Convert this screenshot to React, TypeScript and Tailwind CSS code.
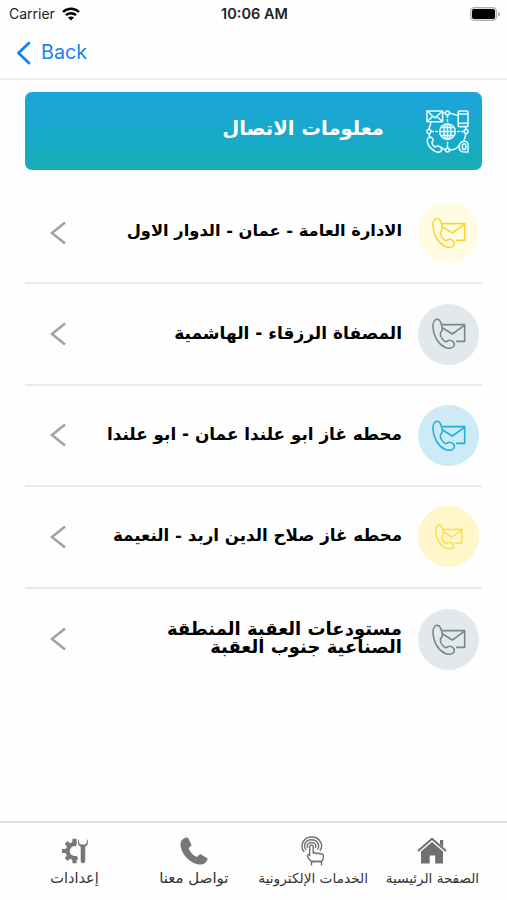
type Contact = {
    lines: string[];
    circle: string;
    icon: string;
    iconSize: string;
    textSize: string;
};

const contacts: Contact[] = [
    { lines: ["الادارة العامة - عمان - الدوار الاول"], circle: "bg-[#fffce3]", icon: "text-[#f9d72f]", iconSize: "w-[34px]", textSize: "text-[16.3px]" },
    { lines: ["المصفاة الرزقاء - الهاشمية"], circle: "bg-[#e2e9eb]", icon: "text-[#76868a]", iconSize: "w-[34px]", textSize: "text-[17px]" },
    { lines: ["محطه غاز ابو علندا عمان - ابو علندا"], circle: "bg-[#cdebf7]", icon: "text-[#22addf]", iconSize: "w-[34px]", textSize: "text-[16.85px]" },
    { lines: ["محطه غاز صلاح الدين اربد - النعيمة"], circle: "bg-[#fff6c9]", icon: "text-[#f9dc3c]", iconSize: "w-[28px]", textSize: "text-[16.7px]" },
    { lines: ["مستودعات العقبة المنطقة", "الصناعية جنوب العقبة"], circle: "bg-[#e2e9eb]", icon: "text-[#76868a]", iconSize: "w-[34px]", textSize: "text-[18px]" },
];

function PhoneMailIcon({ className }: { className?: string }) {
    return (
        <svg viewBox="65 56 102 94" className={className} fill="none" stroke="currentColor" strokeWidth="4.8" strokeLinecap="round" strokeLinejoin="round">
            <path d="M79 60C72 62 67 72 68 84C69 108 82 132 102 143C113 149 127 148 131 140C134 132 128 124 119 123C112 122 111 128 105 127C97 122 90 111 90 103C91 98 96 96 96 88C95 76 89 57 79 60Z" />
            <path d="M98 76H163V126H139" />
            <path d="M97 86L126 104L162 78" />
        </svg>
    );
}

function NetworkIcon() {
    return (
        <svg viewBox="0 0 44 44" className="h-[43px] w-[43px]" fill="none" stroke="#e6fbff" strokeWidth="1.6" strokeLinejoin="round" strokeLinecap="round">
            {/* globe */}
            <circle cx="22" cy="22" r="8" />
            <ellipse cx="22" cy="22" rx="3.6" ry="8" />
            <path d="M22 14V30M14 22H30M15.5 18H28.5M15.5 26H28.5" />
            {/* ring and its dots */}
            <path d="M17 3L20 2.6M24 3L32 5.5M5 13L3 19.5M3 24L4 28M41 19.5L40 17M41 24L39 31M15 38L20 41M24 41C28 41 32 39 34 36" />
            <path d="M22 5V7.5M22 10V11.5M22 33V34.5M22 36V38.5M5 22H7.5M10 22H11.5M32.5 22H34M36.5 22H39" />
            <circle cx="22" cy="3" r="2" />
            <circle cx="22" cy="41" r="2" />
            <circle cx="3" cy="22" r="2" />
            <circle cx="41" cy="22" r="2" />
            {/* envelope */}
            <path d="M1 1H17V12H1ZM1 1L9 8L17 1M1 12L7 6.5M17 12L11 6.5" />
            {/* mobile */}
            <rect x="33" y="1" width="10" height="16" rx="1.2" />
            <path d="M33 4H43M33 13.5H43" />
            {/* handset */}
            <path d="M3 28C0 30 1 36 6 40C10 44 15 44 16 41C17 39 13 36 11 37L9 38C7 36 6 35 6 33C9 31 6 27 3 28Z" />
            {/* at sign */}
            <path d="M43 43H39C35 43 33.5 40 34 37C34.5 33.5 37 32 39.5 32C42 32 43 33.5 43 36V43" />
            <ellipse cx="39" cy="37.5" rx="1.8" ry="3" />
        </svg>
    );
}

function WifiIcon() {
    return (
        <svg viewBox="0 0 18 14" className="h-[14px] w-[18px]" fill="none" stroke="#000" strokeWidth="2.4">
            <path d="M1 5C5.5 .6 12.5 .6 17 5" />
            <path d="M4 8.2C6.8 5.5 11.2 5.5 14 8.2" />
            <path d="M9 13.6L6 10.5C7.7 9 10.3 9 12 10.5Z" fill="#000" stroke="none" />
        </svg>
    );
}

function SettingsIcon() {
    return (
        <svg viewBox="0 0 26 26" className="h-[26px] w-[26px]" fill="#777">
            {/* open gear */}
            <path d="M14.5 6.3A7 7 0 1 0 15.5 19.5" fill="none" stroke="#777" strokeWidth="4" />
            <path d="M10.5 .8H14.5L14.8 4.8H10.2ZM10.5 25.2H14.5L14.8 21.2H10.2ZM0 11V15L4.5 15.3V10.7ZM2.7 6L5.6 3.1L8.5 5.7L5.4 8.9ZM2.7 20L5.6 22.9L8.5 20.3L5.4 17.1Z" />
            {/* wrench */}
            <path d="M17 .7C15 4 16 7.5 18.7 8.8V23.5A2.3 2.3 0 0 0 23.2 23.5V8.8C26 7.5 27 4 24.8 .7V5L22.8 6.5H19L17 5Z" />
        </svg>
    );
}

function PhoneIcon() {
    return (
        <svg viewBox="0 0 28 28" className="h-[28px] w-[28px]" fill="#777">
            <path d="M5.3 .8C2 2 .2 4.7 .5 8C1.3 17.5 10.5 27.2 20.5 27.6C23.7 27.7 26.4 25.6 27.5 22.5C27.7 21.8 27.4 21.3 26.8 20.9L21.2 17.5C20.5 17.1 19.9 17.3 19.3 17.8L16.9 20C13 18.2 10 15 8.6 11.2L10.9 9.1C11.4 8.6 11.5 8 11.2 7.3L8.5 1.5C7.8 .4 6.5 .3 5.3 .8Z" />
        </svg>
    );
}

function TouchIcon() {
    return (
        <svg viewBox="0 0 26 30" className="h-[30px] w-[26px]" fill="none" stroke="#707070" strokeWidth="1.4" strokeLinejoin="round">
            <path d="M4.3 16C-.5 11 2.5 1 11.5 1S24 10 19.8 14.5" />
            <path d="M6.2 14C2.8 10 5 3.8 11.5 3.8S20.2 10 17.3 13.5" />
            <path d="M7.8 12C6 8.8 8.2 6.5 11.5 6.5S17 8.8 15.2 12" />
            <path d="M9.7 20V11C9.7 8.3 13.2 8.3 13.2 11V17C15 16.5 16 16.7 16.5 17.7C18 17 19.3 17.2 19.8 18C22 17.5 23.5 18 23.5 20C23.5 23 22.7 24.5 21.5 25.5H11.5C9.5 24 7.7 22 7.5 19.5L9.7 17.5" />
            <path d="M11.5 29.5V25.5H21.5V29.5" />
        </svg>
    );
}

function HomeIcon() {
    return (
        <svg viewBox="0 0 30 27" className="h-[27px] w-[30px]" fill="#707070">
            <path d="M1 14L15 1.8L29 14" fill="none" stroke="#707070" strokeWidth="2" />
            <path d="M23 3H26.2V10L23 7.3ZM4 14.5L15 5L26 14.5V26.5H18.2V18.5H12.7V26.5H4Z" />
        </svg>
    );
}

const tabs = [
    { label: "إعدادات", Icon: SettingsIcon, text: "text-[14.5px]" },
    { label: "تواصل معنا", Icon: PhoneIcon, text: "text-[15px]" },
    { label: "الخدمات الإلكترونية", Icon: TouchIcon, text: "text-[13.7px]" },
    { label: "الصفحة الرئيسية", Icon: HomeIcon, text: "text-[13.5px]" },
];

export default function App() {
    return (
        <div className="flex h-[900px] w-[507px] flex-col overflow-hidden bg-[#fefefe] font-['DejaVu_Sans',sans-serif]">
            {/* Status bar */}
            <div className="grid h-[27px] grid-cols-3 items-center pl-[9px] pr-[7px] font-['Inter',sans-serif] text-[14px] text-[#222]">
                <div className="flex items-center gap-[7px]">
                    <span>Carrier</span>
                    <WifiIcon />
                </div>
                <span className="text-center text-[14.5px] font-semibold">10:06 AM</span>
                <div className="flex items-center justify-end gap-px">
                    <div className="h-[14px] w-[27px] rounded-[4px] border border-[#b0b0b0] bg-[#ddd] p-px">
                        <div className="h-full w-full rounded-[2px] bg-black" />
                    </div>
                    <div className="h-[4px] w-[2px] rounded-r bg-[#aaa]" />
                </div>
            </div>

            {/* Navigation */}
            <div className="flex h-[53px] items-center border-b-2 border-[#efefef] pl-[16px] font-['Inter',sans-serif] text-[19.7px] text-[#1581f5]">
                <svg viewBox="0 0 15 24" className="mr-[10px] h-[24px] w-[15px]" fill="none" stroke="currentColor" strokeWidth="2.8" strokeLinecap="round" strokeLinejoin="round">
                    <path d="M13 2L2.5 12L13 22" />
                </svg>
                <span className="pt-px">Back</span>
            </div>

            {/* Banner */}
            <div dir="rtl" className="mx-[25px] mt-[12px] flex h-[78px] shrink-0 items-center rounded-[7px] bg-linear-to-b from-[#1ca5dc] to-[#18adb7] pr-[13px] text-white">
                <NetworkIcon />
                <h1 className="mr-[42px] pb-[4px] text-[19.6px] font-bold leading-none">معلومات الاتصال</h1>
            </div>

            {/* Contacts */}
            <div dir="rtl" className="mx-[25px] mt-[13px] flex flex-col">
                {contacts.map((c) => (
                    <div key={c.lines[0]} className="flex h-[101.4px] items-center border-b-2 border-[#ebebeb] pr-[3px] last:border-b-0">
                        <div className={`flex h-[61px] w-[61px] shrink-0 items-center justify-center rounded-full ${c.circle}`}>
                            <PhoneMailIcon className={`${c.iconSize} ${c.icon}`} />
                        </div>
                        <div className={`mr-[16px] grow whitespace-nowrap pb-[3px] font-bold leading-[18px] text-black ${c.textSize}`}>
                            {c.lines.map((line) => (
                                <p key={line}>{line}</p>
                            ))}
                        </div>
                        <svg viewBox="0 0 16 24" className="ml-[25px] h-[24px] w-[16px] shrink-0" fill="none" stroke="#a3a3a3" strokeWidth="2.7">
                            <path d="M15 1.5L2 12L15 22.5" />
                        </svg>
                    </div>
                ))}
            </div>

            {/* Tab bar */}
            <nav className="mt-auto flex h-[79px] justify-center border-t-2 border-[#dedede] pt-[12px] text-[#333]">
                {tabs.map(({ label, Icon, text }) => (
                    <div key={label} className="flex w-[119.3px] shrink-0 flex-col items-center">
                        <div className="flex h-[31px] items-center"><Icon /></div>
                        <span className={`mt-[3px] whitespace-nowrap leading-[18px] ${text}`}>{label}</span>
                    </div>
                ))}
            </nav>
        </div>
    );
}
